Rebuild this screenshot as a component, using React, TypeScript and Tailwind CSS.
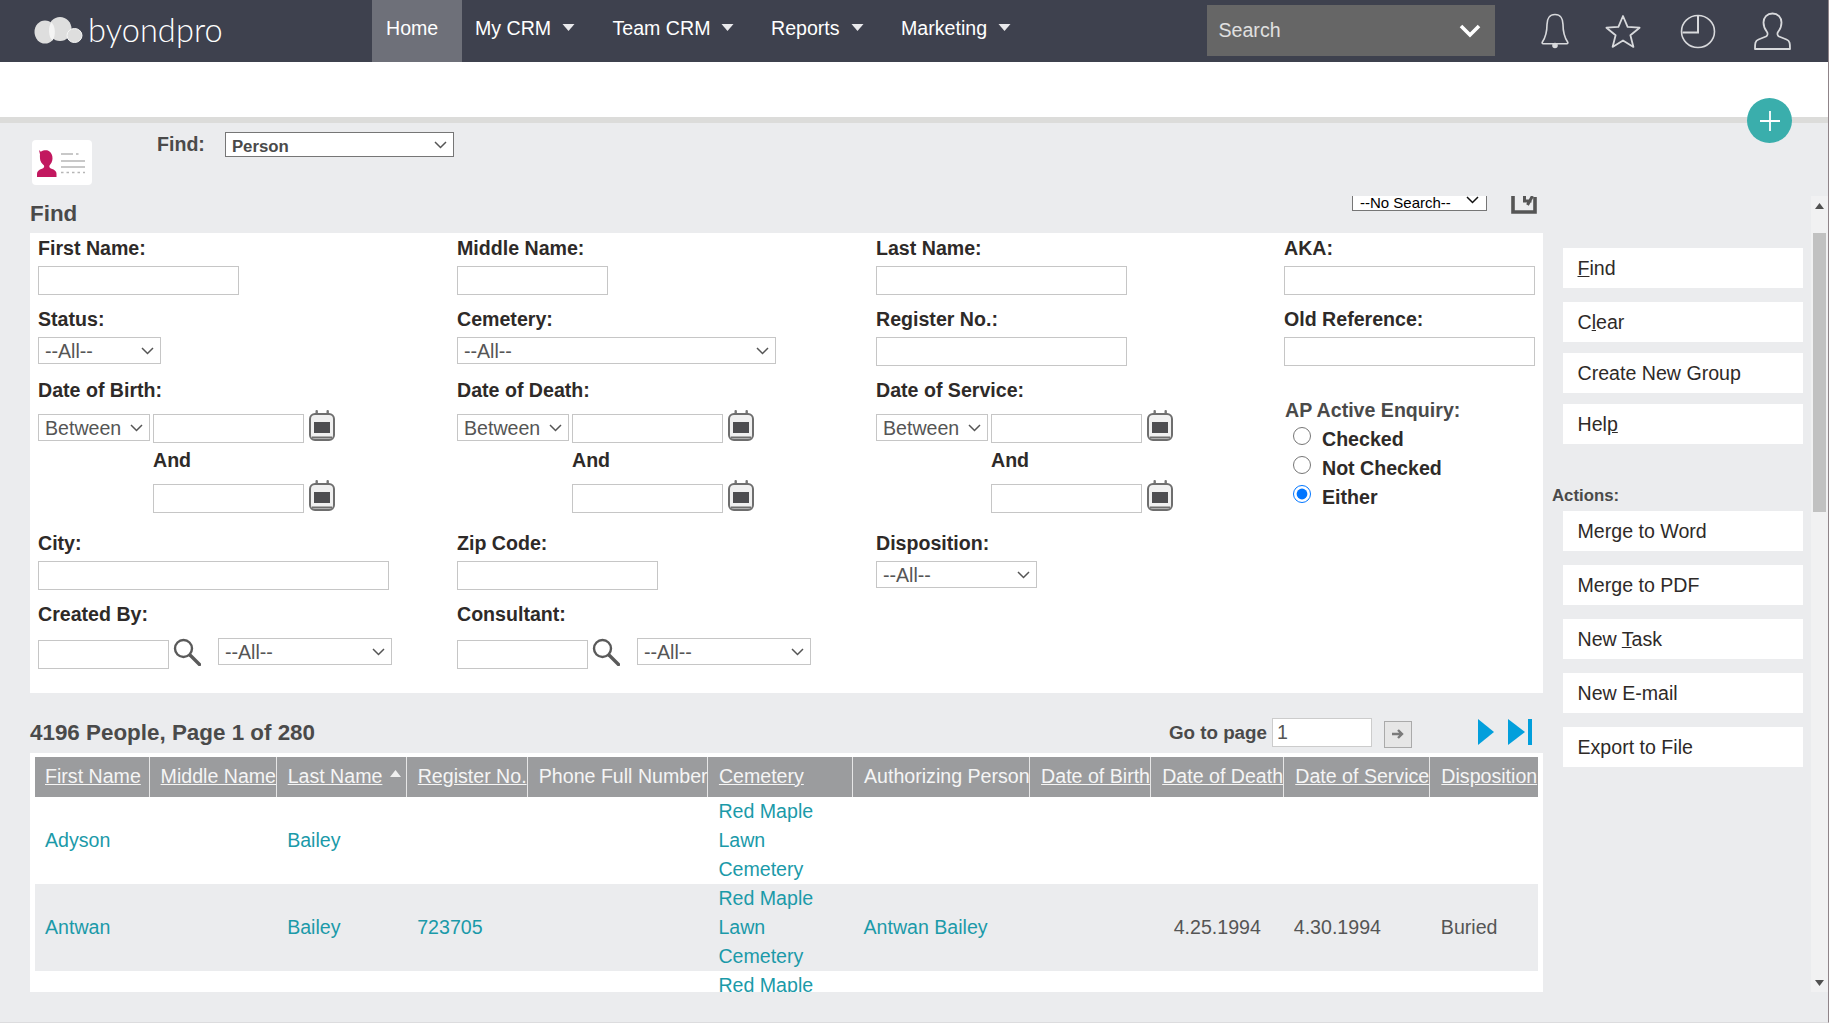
import React from "react";

const Caret = () => (
  <svg width="15" height="9" viewBox="0 0 15 9" className="ml-[10px] mt-[-2px]">
    <path d="M1.500 1h12L7.500 8z" fill="#e9e9ec" />
  </svg>
);

const NavItem = ({ label, w }: { label: string; w: string }) => (
  <div className={`flex items-center h-full pb-[6px] ${w}`}>
    <span>{label}</span>
    <Caret />
  </div>
);

const Logo = () => (
  <div className="flex items-center w-[372px] pl-[34px]">
    <svg width="49" height="27" viewBox="0 0 49 27" className="mr-[5px] mt-[-2px]">
      <ellipse cx="11" cy="15" rx="10.500" ry="11.500" fill="#dedede" />
      <ellipse cx="26" cy="12" rx="11.500" ry="12" fill="#dedede" />
      <path d="M17.500 5.300C14 9 14 20 18.500 23.500 22 19 21.500 9 17.500 5.300z" fill="#f4f4f4" />
      <ellipse cx="40.500" cy="18.500" rx="7.500" ry="7" fill="#dedede" stroke="#f6f6f6" strokeWidth="1" />
    </svg>
    <span className="text-[32.500px] leading-none font-light text-white font-['Lato','Open_Sans',sans-serif] tracking-[0.1px] mt-[-1px]">
      byondpro
    </span>
  </div>
);

const Input = ({ w, className = "" }: { w: string; className?: string }) => (
  <input className={`block h-[29px] bg-white border border-[#c6c6c6] shrink-0 ${w} ${className}`} />
);

const Chevron = ({ color = "#555555", className = "" }: { color?: string; className?: string }) => (
  <svg
    width="13"
    height="8"
    viewBox="0 0 13 8"
    className={`absolute right-[7px] top-1/2 -translate-y-1/2 pointer-events-none ${className}`}
  >
    <path d="M1 1l5.500 5.500L12 1" fill="none" stroke={color} strokeWidth="1.500" />
  </svg>
);

const Sel = ({ w, children, className = "" }: { w: string; children: React.ReactNode; className?: string }) => (
  <div className={`relative h-[27px] shrink-0 ${w} ${className}`}>
    <select className="block w-full h-full appearance-none bg-white border border-[#c6c6c6] text-[#555555] pl-[6px] leading-[22px]">
      {children}
    </select>
    <Chevron />
  </div>
);

const Label = ({ children, className = "" }: { children: React.ReactNode; className?: string }) => (
  <div className={`h-[29px] leading-[31px] font-bold text-[#2e2a28] ${className}`}>{children}</div>
);

const Calendar = () => (
  <svg width="26" height="31" viewBox="0 0 26 31" className="ml-[5px] mt-[-4px] shrink-0">
    <rect x="6.500" y="0" width="2.400" height="8" rx="1" fill="#777777" />
    <rect x="17.500" y="0" width="2.400" height="8" rx="1" fill="#777777" />
    <rect x="1" y="4" width="24" height="26" rx="5" fill="#f0f0f0" stroke="#6e6e6e" strokeWidth="2" />
    <rect x="5" y="12" width="16" height="11" fill="#4d4d50" />
    <path d="M3 27.500h20" stroke="#6e6e6e" strokeWidth="2" />
  </svg>
);

const Magnifier = () => (
  <svg width="28" height="28" viewBox="0 0 28 28" className="shrink-0">
    <circle cx="10.500" cy="10.500" r="8.500" fill="#ffffff" stroke="#5a5a5a" strokeWidth="2.400" />
    <path d="M17 17l9.500 9.500" stroke="#5a5a5a" strokeWidth="3.400" strokeLinecap="round" />
  </svg>
);

const DateField = ({ label }: { label: string }) => (
  <div>
    <Label className="mb-[10px]">{label}</Label>
    <div className="flex items-start">
      <Sel w="w-[112px]" className="mr-[3px]">
        <option>Between</option>
      </Sel>
      <Input w="w-[151px]" />
      <Calendar />
    </div>
    <Label className="ml-[115px] mt-[2px]">And</Label>
    <div className="flex items-start ml-[115px] mt-[10px]">
      <Input w="w-[151px]" />
      <Calendar />
    </div>
  </div>
);

const Radio = ({ label, checked }: { label: string; checked?: boolean }) => (
  <label className="flex items-center h-[29px] pt-[2px] font-bold text-[#2e2a28]">
    <input
      type="radio"
      name="ap"
      defaultChecked={checked}
      className="w-[18px] h-[18px] m-0 ml-[9px] mr-[11px] mt-[-8px] shrink-0"
    />
    {label}
  </label>
);

const SideBtn = ({ children, className = "" }: { children: React.ReactNode; className?: string }) => (
  <div className={`h-[40px] w-[240px] bg-white flex items-center pl-[14.500px] text-[#2e2a28] ${className}`}>
    <span>{children}</span>
  </div>
);

const headers: [string, boolean, number][] = [
  ["First Name", true, 114],
  ["Middle Name", true, 127],
  ["Last Name", true, 130],
  ["Register No.", true, 121],
  ["Phone Full Number", false, 180],
  ["Cemetery", true, 145],
  ["Authorizing Person", false, 177],
  ["Date of Birth", true, 121],
  ["Date of Death", true, 133],
  ["Date of Service", true, 146],
  ["Disposition", true, 108],
];

const A = ({ children }: { children: React.ReactNode }) => <span className="text-[#1b9aa9]">{children}</span>;

const Row = ({
  first,
  last,
  reg,
  auth,
  dod,
  dos,
  disp,
  alt,
}: {
  first?: string;
  last?: string;
  reg?: string;
  auth?: string;
  dod?: string;
  dos?: string;
  disp?: string;
  alt?: boolean;
}) => (
  <tr className={`h-[87px] ${alt ? "bg-[#ebecee]" : "bg-white"}`}>
    <td className="pl-[10px]"><A>{first}</A></td>
    <td />
    <td className="pl-[11px]"><A>{last}</A></td>
    <td className="pl-[11px]"><A>{reg}</A></td>
    <td />
    <td className="pl-[11px] pr-[10px]"><A>Red Maple Lawn Cemetery</A></td>
    <td className="pl-[11px] whitespace-nowrap"><A>{auth}</A></td>
    <td />
    <td className="pl-[23px] text-[#555555]">{dod}</td>
    <td className="pl-[10px] text-[#555555]">{dos}</td>
    <td className="pl-[11px] text-[#555555]">{disp}</td>
  </tr>
);

export default function App() {
  return (
    <div className="w-[1829px] h-[1023px] overflow-hidden flex flex-col relative bg-[#ebecee] text-[19.6px] leading-[29px] font-['Liberation_Sans',Arial,sans-serif] text-[#2e2a28] border-b border-r border-b-[#dcdcde] border-r-[#8f8489]">
      {/* Header */}
      <header className="h-[62px] bg-[#3e414e] flex items-stretch text-white shrink-0">
        <Logo />
        <div className="w-[90px] bg-[#6e7079] flex items-center pl-[14px] pb-[6px]">Home</div>
        <div className="flex pl-[13px] h-full">
          <NavItem label="My CRM" w="w-[137.500px]" />
          <NavItem label="Team CRM" w="w-[158.500px]" />
          <NavItem label="Reports" w="w-[130px]" />
          <NavItem label="Marketing" w="w-[150px]" />
        </div>
        <div className="ml-[155.500px] mt-[5px] w-[288px] h-[51px] bg-[#666666] flex items-center justify-between pl-[12px] pr-[14px] text-[#e0e0e0]">
          <span>Search</span>
          <svg width="22" height="14" viewBox="0 0 22 14">
            <path d="M2 2l9 9 9-9" fill="none" stroke="#ffffff" strokeWidth="3.600" />
          </svg>
        </div>
        <div className="flex items-center pl-[46px]">
          <svg width="28" height="36" viewBox="0 0 28 36" fill="none" stroke="#d8d9dc" strokeWidth="1.600" className="mr-[36px] mt-[-1px]">
            <path d="M14 1.500c-5.500 0-8 4.500-8 10 0 8-1.600 13-4.600 17.500-.6.900-.2 1.700.8 1.700h23.600c1 0 1.400-.8.800-1.700C23.600 24.500 22 19.500 22 11.500c0-5.500-2.500-10-8-10z" strokeLinejoin="round" />
            <circle cx="14" cy="32.500" r="2" fill="#d8d9dc" />
          </svg>
          <svg width="36" height="34" viewBox="0 0 36 34" fill="none" stroke="#d8d9dc" strokeWidth="1.800" className="mr-[39px]">
            <path d="M18 2l4.600 10.800 12 .9-9.200 7.600 3 11.600L18 26.500 7.600 32.900l3-11.600L1.400 13.700l12-.9z" strokeLinejoin="round" />
          </svg>
          <svg width="36" height="35" viewBox="0 0 36 35" fill="none" stroke="#d8d9dc" strokeWidth="1.600" className="mr-[38px]">
            <ellipse cx="18" cy="17.500" rx="16.500" ry="16" />
            <path d="M18 2v16.500H2.500" strokeWidth="2" />
          </svg>
          <svg width="37" height="38" viewBox="0 0 37 38" fill="none" stroke="#d8d9dc" strokeWidth="1.800">
            <path d="M18.500 1.500c-5.500 0-9 4-9 9 0 4 1.500 7 3.500 9.500 1 1.500.5 3.500-1 4.500l-7.500 3c-3.500 1.500-3.500 4-3.500 9.500h35c0-5.500 0-8-3.500-9.500l-7.500-3c-1.500-1-2-3-1-4.500 2-2.500 3.500-5.500 3.500-9.500 0-5-3.500-9-9-9z" strokeLinejoin="round" />
          </svg>
        </div>
      </header>

      {/* White strip */}
      <div className="h-[55px] bg-white shrink-0" />
      <div className="h-[6px] bg-[#dcdcda] shrink-0" />

      {/* FAB */}
      <div className="absolute left-[1747px] top-[98px] w-[45px] h-[45px] rounded-full bg-[#3aaeac] flex items-center justify-center">
        <svg width="22" height="22" viewBox="0 0 22 22">
          <path d="M11 1v20M1 11h20" stroke="#ffffff" strokeWidth="1.800" />
        </svg>
      </div>

      {/* Find type row */}
      <div className="h-[73px] shrink-0 flex items-start pl-[32px]">
        <div className="w-[60px] h-[45px] mt-[17px] bg-white rounded-[4px]">
          <svg width="60" height="45" viewBox="0 0 60 45" className="block">
            <path d="M7 10l1.800 1.800c3-1.800 6.700-2 8.700-.3 2 1.500 3 4 3 7 0 3-1.500 5.300-3 7-.6 1.700.4 2.800 2 3.300 3 1 5 2.500 5 5V37H5v-3.200c0-2.500 2-4 5-5 1.600-.5 2.600-1.600 2-3.300-2-1.700-4-4-4-7 0-1.500-.2-2.500 0-4z" fill="#c2185f" />
            <path d="M29 14h12M44 14h2.500M29 21h24M29 27h24" stroke="#b6b6b6" strokeWidth="1.600" />
            <path d="M29 32.500h24" stroke="#b6b6b6" strokeWidth="1.600" strokeDasharray="2.500 3" />
          </svg>
        </div>
        <div className="ml-[65px] mt-[7px] font-bold text-[#4a4a4a]">Find:</div>
        <div className="relative ml-[20px] mt-[9px] w-[229px] h-[25px]">
          <select className="block w-full h-full appearance-none bg-white border border-[#767676] pl-[6px] pt-[5px] text-[16.800px] font-bold text-[#4a4a4a] leading-none">
            <option>Person</option>
          </select>
          <Chevron />
        </div>
      </div>

      {/* Scroller */}
      <div className="h-[796px] shrink-0 overflow-hidden flex">
        <div className="w-[30px] shrink-0" />
        <div className="w-[1513px] shrink-0 flex flex-col h-full">
          <div className="h-[37px] shrink-0 flex items-center">
            <div className="text-[22.400px] font-bold text-[#4a4a4a] mt-[-2px]">Find</div>
            <div className="relative ml-auto self-start mt-[-10px] w-[135px] h-[25px]">
              <select className="block w-full h-full appearance-none bg-white border border-[#767676] text-[15px] text-black pl-[7px] pt-[1px]">
                <option>--No Search--</option>
              </select>
              <Chevron color="#111111" className="right-[8px] mt-[1px]" />
            </div>
            <svg width="26" height="28" viewBox="0 0 26 28" className="ml-[24px] mr-[6px] self-start mt-[-10px]">
              <path d="M2 0v26h22V11" fill="none" stroke="#555555" strokeWidth="3.600" />
              <path d="M13.500 8v7h7M21.500 10l-5 9" fill="none" stroke="#555555" strokeWidth="3" />
            </svg>
          </div>

          {/* Form */}
          <div className="bg-white h-[460px] shrink-0 pl-[8px] grid grid-cols-[419px_419px_408px_259px] content-start gap-y-[9px]">
            <div>
              <Label className="mb-[4px]">First Name:</Label>
              <Input w="w-[201px]" />
            </div>
            <div>
              <Label className="mb-[4px]">Middle Name:</Label>
              <Input w="w-[151px]" />
            </div>
            <div>
              <Label className="mb-[4px]">Last Name:</Label>
              <Input w="w-[251px]" />
            </div>
            <div>
              <Label className="mb-[4px]">AKA:</Label>
              <Input w="w-[251px]" />
            </div>

            <div>
              <Label className="mb-[4px]">Status:</Label>
              <Sel w="w-[123px]"><option>--All--</option></Sel>
            </div>
            <div>
              <Label className="mb-[4px]">Cemetery:</Label>
              <Sel w="w-[319px]"><option>--All--</option></Sel>
            </div>
            <div>
              <Label className="mb-[4px]">Register No.:</Label>
              <Input w="w-[251px]" />
            </div>
            <div>
              <Label className="mb-[4px]">Old Reference:</Label>
              <Input w="w-[251px]" />
            </div>

            <DateField label="Date of Birth:" />
            <DateField label="Date of Death:" />
            <DateField label="Date of Service:" />
            <div className="pt-[20px]">
              <Label className="ml-[1px] text-[#4a4a4a]">AP Active Enquiry:</Label>
              <Radio label="Checked" />
              <Radio label="Not Checked" />
              <Radio label="Either" checked />
            </div>

            <div className="pt-[6px]">
              <Label className="mb-[4px]">City:</Label>
              <Input w="w-[351px]" />
            </div>
            <div className="pt-[6px]">
              <Label className="mb-[4px]">Zip Code:</Label>
              <Input w="w-[201px]" />
            </div>
            <div className="pt-[6px]">
              <Label className="mb-[4px]">Disposition:</Label>
              <Sel w="w-[161px]"><option>--All--</option></Sel>
            </div>
            <div />

            <div>
              <Label className="mb-[10px]">Created By:</Label>
              <div className="flex items-start">
                <Input w="w-[131px] mt-[2px]" />
                <div className="ml-[4px]"><Magnifier /></div>
                <Sel w="w-[174px]" className="ml-[17px]"><option>--All--</option></Sel>
              </div>
            </div>
            <div>
              <Label className="mb-[10px]">Consultant:</Label>
              <div className="flex items-start">
                <Input w="w-[131px] mt-[2px]" />
                <div className="ml-[4px]"><Magnifier /></div>
                <Sel w="w-[174px]" className="ml-[17px]"><option>--All--</option></Sel>
              </div>
            </div>
            <div />
            <div />
          </div>

          {/* Results header */}
          <div className="h-[60px] shrink-0 pt-[18px] pr-[11px] flex items-center">
            <div className="text-[22.400px] font-bold text-[#4a4a4a]">4196 People, Page 1 of 280</div>
            <div className="ml-auto font-bold text-[18.800px] text-[#4a4a4a]">Go to page</div>
            <input
              defaultValue="1"
              className="ml-[5px] w-[100px] h-[29px] bg-white border border-[#cccccc] pl-[4px] text-[19.600px] text-[#555555]"
            />
            <div className="ml-[12px] mt-[4px] w-[28px] h-[27px] bg-[#e6e6e6] border border-[#aaaaaa] flex items-center justify-center">
              <svg width="14" height="12" viewBox="0 0 14 12">
                <path d="M1 6h10M7 2l4 4-4 4" fill="none" stroke="#7a7a7a" strokeWidth="2.400" />
              </svg>
            </div>
            <svg width="16" height="26" viewBox="0 0 16 26" className="ml-[66px]">
              <path d="M0 0l16 13L0 26z" fill="#029fdc" />
            </svg>
            <svg width="24" height="26" viewBox="0 0 24 26" className="ml-[14px]">
              <path d="M0 0l17 13L0 26z" fill="#029fdc" />
              <rect x="20" y="0" width="4" height="26" fill="#029fdc" />
            </svg>
          </div>

          {/* Table */}
          <div className="h-[239px] shrink-0 bg-white overflow-hidden pt-[4px] pl-[5px]">
            <table className="table-fixed border-collapse w-[1503px]">
              <colgroup>
                {headers.map(([h, , w]) => (
                  <col key={h} style={{ width: w }} />
                ))}
              </colgroup>
              <thead>
                <tr className="h-[40px] bg-[#9b9c9e] text-[#f5f5f5]">
                  {headers.map(([h, link], i) => (
                    <th
                      key={h}
                      className={`text-left font-normal whitespace-nowrap pr-0 pt-0 pb-[2px] overflow-visible ${
                        i === 0 ? "pl-[10px]" : "pl-[11px]"
                      } ${i < headers.length - 1 ? "border-r border-[#e6e6e6]" : ""}`}
                    >
                      <span className={link ? "underline" : ""}>{h}</span>
                      {h === "Last Name" && (
                        <svg width="11" height="7" viewBox="0 0 11 7" className="inline-block ml-[8px] mb-[7px]">
                          <path d="M5.500 0l5.500 7H0z" fill="#f0f0f0" />
                        </svg>
                      )}
                    </th>
                  ))}
                </tr>
              </thead>
              <tbody>
                <Row first="Adyson" last="Bailey" />
                <Row
                  first="Antwan"
                  last="Bailey"
                  reg="723705"
                  auth="Antwan Bailey"
                  dod="4.25.1994"
                  dos="4.30.1994"
                  disp="Buried"
                  alt
                />
                <Row />
              </tbody>
            </table>
          </div>
        </div>

        {/* Right actions */}
        <div className="w-[268px] shrink-0 pl-[20px] pt-[52px] flex flex-col">
          <SideBtn><u>F</u>ind</SideBtn>
          <SideBtn className="mt-[14px]">C<u>l</u>ear</SideBtn>
          <SideBtn className="mt-[11px]">Create New Group</SideBtn>
          <SideBtn className="mt-[11px]">Hel<u>p</u></SideBtn>
          <div className="h-[24px] leading-[25px] mt-[39px] ml-[-11px] text-[16.800px] font-bold text-[#4a4a4a]">Actions:</div>
          <SideBtn className="mt-[4px]">Merge to Word</SideBtn>
          <SideBtn className="mt-[14px]">Merge to PDF</SideBtn>
          <SideBtn className="mt-[14px]">New <u>T</u>ask</SideBtn>
          <SideBtn className="mt-[14px]">New E-mail</SideBtn>
          <SideBtn className="mt-[14px]">Export to File</SideBtn>
        </div>

        {/* Scrollbar */}
        <div className="w-[17px] shrink-0 bg-[#f1f1f2] flex flex-col items-center">
          <svg width="9" height="6" viewBox="0 0 9 6" className="mt-[7px]">
            <path d="M4.500 0L9 6H0z" fill="#505050" />
          </svg>
          <div className="w-[13px] h-[279px] bg-[#c1c1c1] mt-[24px]" />
          <svg width="9" height="6" viewBox="0 0 9 6" className="mt-auto mb-[6px]">
            <path d="M4.500 6L9 0H0z" fill="#505050" />
          </svg>
        </div>
      </div>
    </div>
  );
}
